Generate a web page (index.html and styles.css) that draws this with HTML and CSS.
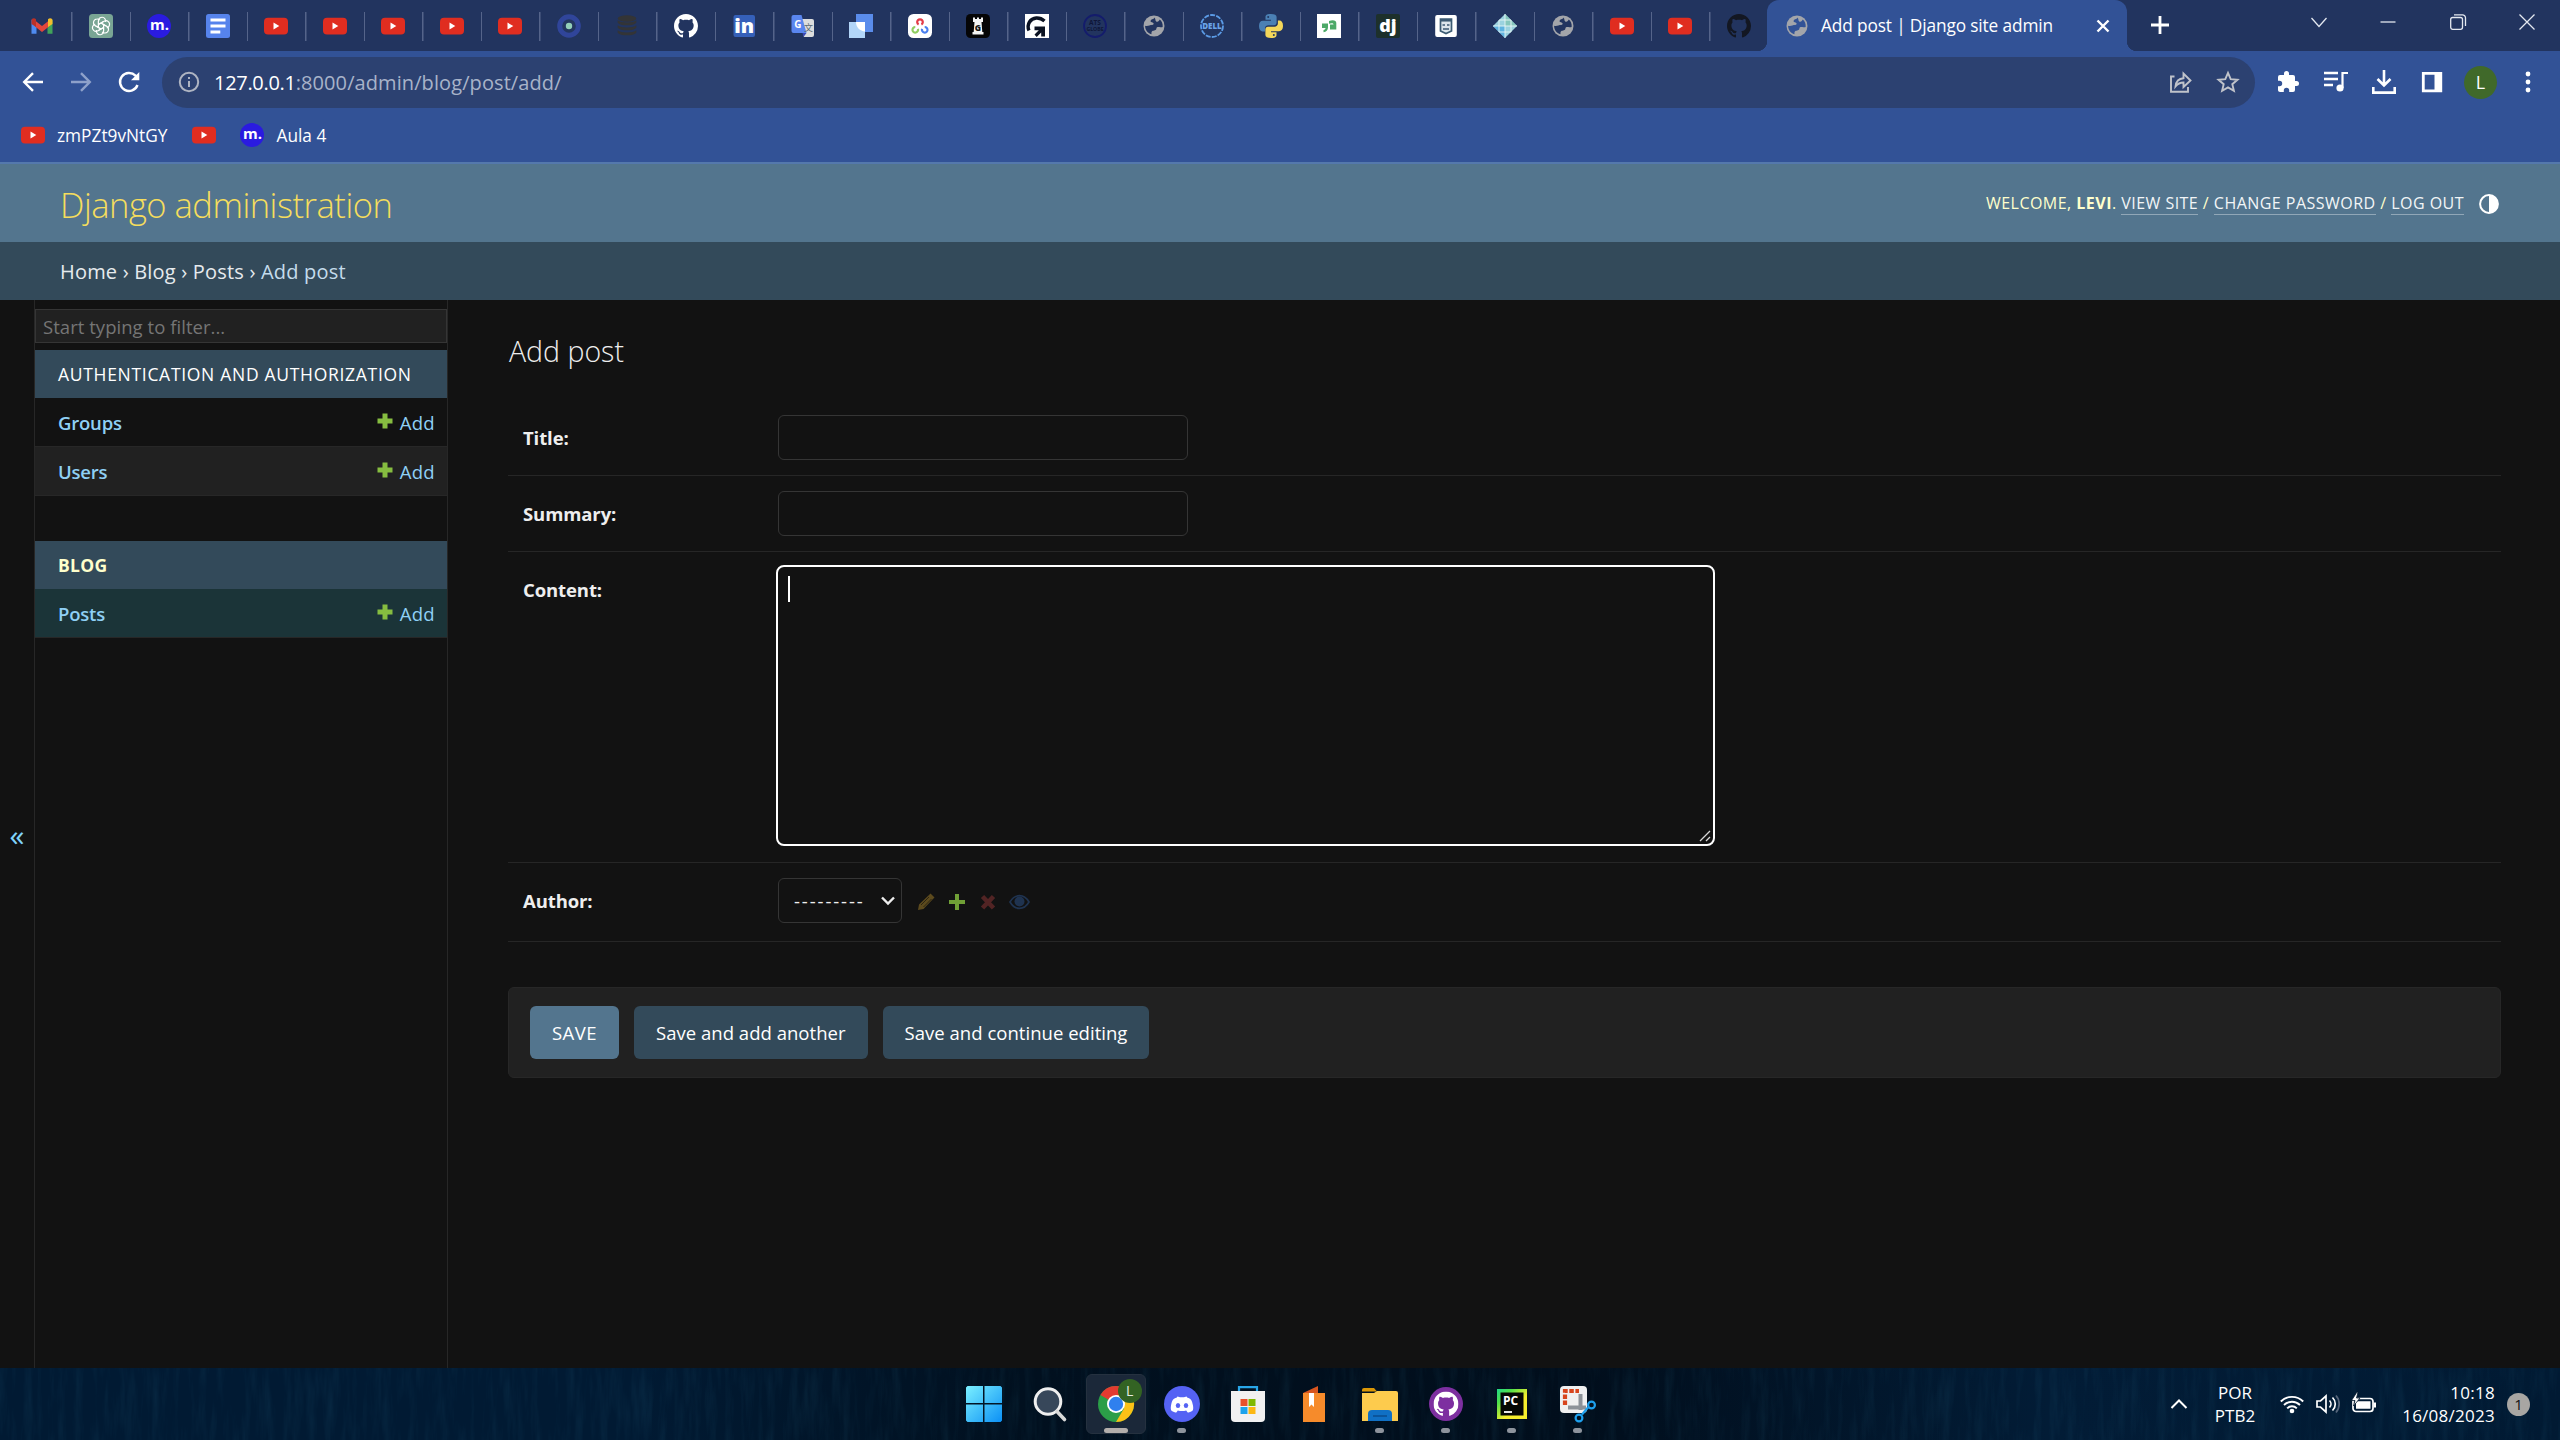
FILE: index.html
```html
<!DOCTYPE html>
<html lang="en">
<head>
<meta charset="utf-8">
<title>Add post | Django site admin</title>
<link rel="stylesheet" href="styles.css">
</head>
<body>
<svg class="defs" aria-hidden="true">
  <defs>
    <symbol id="yt" viewBox="0 0 24 24"><rect y="3.7" width="24" height="16.8" rx="4" fill="#e02d20"/><path d="M9.5 8.6v7l5.8-3.5z" fill="#fff"/></symbol>
    <symbol id="mdot" viewBox="0 0 24 24"><circle cx="12" cy="12" r="12" fill="#2a1be0"/><text x="12.500" y="16" text-anchor="middle" font-size="15" font-weight="700" fill="#fff">m.</text></symbol>
    <symbol id="globe" viewBox="0 0 24 24"><circle cx="12" cy="12" r="10.5" fill="#a3a5aa"/><path d="M12.6 3.6c-1 2-4 1.600-4 3.600 0 1.600 2.600.4 3 2.400.3 1.700-2.600 1.400-4.200 2-1.200.4-3 .8-4.300.2 0 4.200 2.600 7.400 6.300 8.500.4-1.500-.5-2.300 1-3.200 1.500-.8 3.800-.4 4-2.600.1-1.500 1.200-1.700 2.800-1.600 1.500.1 2.600.7 3.500-.2.2-3-.9-5.500-3-7.100-.6 1.700-2 2.500-3.500 1.800-1-.5-.5-2.300-1.600-3.800z" fill="var(--hole)"/></symbol>
    <symbol id="gh" viewBox="0 0 16 16"><path d="M8 0C3.580 0 0 3.580 0 8c0 3.540 2.290 6.530 5.470 7.590.4.070.55-.17.55-.38 0-.19-.01-.82-.01-1.490-2.010.37-2.530-.49-2.690-.94-.09-.23-.48-.94-.82-1.130-.28-.15-.68-.52-.01-.53.63-.01 1.080.58 1.230.82.72 1.210 1.870.87 2.330.66.07-.52.28-.87.51-1.070-1.780-.2-3.640-.89-3.640-3.950 0-.87.31-1.590.82-2.150-.08-.2-.36-1.020.08-2.120 0 0 .67-.21 2.200.82.64-.18 1.320-.27 2-.27s1.360.09 2 .27c1.530-1.040 2.200-.82 2.200-.82.44 1.100.16 1.920.08 2.120.51.56.82 1.270.82 2.150 0 3.070-1.870 3.750-3.650 3.950.29.25.54.73.54 1.480 0 1.070-.01 1.930-.01 2.200 0 .21.15.46.55.38A8.010 8.010 0 0 0 16 8c0-4.420-3.580-8-8-8z" fill="currentColor"/></symbol>
    <symbol id="plus" viewBox="0 0 18 18"><path d="M6.500 1.500h5v5h5v5h-5v5h-5v-5h-5v-5h5z" fill="#86bd40"/></symbol>
  </defs>
</svg>

<header class="strip">
  <div class="tabs">
    <span class="tab"><svg viewBox="0 0 24 24"><path d="M1.500 5.500v14.300h5V9z" fill="#4f8bf0"/><path d="M22.500 5.500v14.300h-5V9z" fill="#41a35a"/><path d="M5 6.500l7 5.500 7-5.500v6l-7 5.500-7-5.500z" fill="#e2463b"/><path d="M1.500 10V6.500C1.500 4 4.500 3.600 6 5.200V13z" fill="#bb3127"/><path d="M22.500 10V6.500C22.500 4 19.500 3.600 18 5.200V13z" fill="#f2bd2d"/></svg></span>
    <span class="tab"><svg viewBox="0 0 24 24"><rect width="24" height="24" rx="3.500" fill="#79a594"/><g fill="none" stroke="#fff" stroke-width="1.100"><path id="petal" d="M9.400 13.500V7a3.600 3.600 0 0 1 6.600-2.100c.7 1 .8 2 .6 3.100M9.400 10.500l5.600-3.200"/><use href="#petal" transform="rotate(60 12 12)"/><use href="#petal" transform="rotate(120 12 12)"/><use href="#petal" transform="rotate(180 12 12)"/><use href="#petal" transform="rotate(240 12 12)"/><use href="#petal" transform="rotate(300 12 12)"/></g></svg></span>
    <span class="tab"><svg><use href="#mdot"/></svg></span>
    <span class="tab"><svg viewBox="0 0 24 24"><rect width="24" height="24" rx="2.500" fill="#5683ec"/><path d="M4.500 6h15M4.500 12h15M4.500 18h9.800" stroke="#fff" stroke-width="2.900"/></svg></span>
    <span class="tab"><svg><use href="#yt"/></svg></span>
    <span class="tab"><svg><use href="#yt"/></svg></span>
    <span class="tab"><svg><use href="#yt"/></svg></span>
    <span class="tab"><svg><use href="#yt"/></svg></span>
    <span class="tab"><svg><use href="#yt"/></svg></span>
    <span class="tab"><svg viewBox="0 0 24 24"><circle cx="12" cy="12" r="9.300" fill="#23365f" stroke="#30459a" stroke-width="5"/><circle cx="12" cy="12" r="3.200" fill="#93cfb9"/></svg></span>
    <span class="tab"><svg viewBox="0 0 24 24" fill="#333436"><ellipse cx="12" cy="4.500" rx="9.300" ry="3.300"/><path id="disk" d="M2.700 6.200c3 3 15.600 3 18.600 0v2.600c-2 3.400-16.600 3.400-18.600 0z"/><use href="#disk" y="5"/><use href="#disk" y="10"/></svg></span>
    <span class="tab light"><svg><use href="#gh"/></svg></span>
    <span class="tab"><svg viewBox="0 0 24 24"><rect x="1.500" y="1" width="21.500" height="22" rx="2" fill="#3560b9"/><text x="12.300" y="19" text-anchor="middle" font-size="20" font-weight="800" fill="#fff">in</text></svg></span>
    <span class="tab"><svg viewBox="0 0 24 24"><path d="M9 5h12a2 2 0 0 1 2 2v14a2 2 0 0 1-2 2h-8z" fill="#dcdddd"/><path d="M2.500 1h8l5 18h-13a2 2 0 0 1-2-2V3a2 2 0 0 1 2-2z" fill="#5a86ef"/><path d="M11.500 19h4l-3 4z" fill="#3a49b4"/><text x="6.800" y="13.500" text-anchor="middle" font-size="10" font-weight="700" fill="#fff">G</text><text x="17.500" y="17" text-anchor="middle" font-size="9" class="cjk" fill="#5d6a72">文</text></svg></span>
    <span class="tab"><svg viewBox="0 0 24 24"><path d="M7 0h17v18H7z" fill="#5a8ceb"/><path d="M0 8h16v16H0z" fill="#b2d5f8"/><path d="M7 8h9v9.500c-5-.5-9-4-9-9.500z" fill="#fff"/></svg></span>
    <span class="tab"><svg viewBox="0 0 24 24"><rect width="24" height="24" rx="5.500" fill="#fff"/><g fill="none" stroke-width="2.200"><path d="M10.600 10.500a2.800 2.800 0 1 1 2.800 0" stroke="#e33b47"/><path d="M9.900 14.800a2.800 2.800 0 1 1-2.600-1.800" stroke="#8fcd62"/><path d="M16.700 13a2.800 2.800 0 1 1-2.600 1.800" stroke="#4a7ff0"/></g></svg></span>
    <span class="tab"><svg viewBox="0 0 24 24"><rect width="24" height="24" rx="4.500" fill="#050506"/><path d="M7 3.500h2V5h2V3.500h2V5h2V3.500h2V8h-1.500l.8 10H17.500v2.500h-11V18h1.200l.8-10H7z" fill="#f4f4f4"/><text x="12" y="16.500" text-anchor="middle" font-size="8.500" font-weight="800" fill="#111">G</text></svg></span>
    <span class="tab"><svg viewBox="0 0 24 24"><path d="M0 0h24v24H0z" fill="#fff"/><path d="M4 16.500A9 9 0 0 1 4.500 8C7.500 3 14.500 2.600 19.500 7" fill="none" stroke="#0b1222" stroke-width="3.400"/><path d="M9.500 12.500h10.500v10h-3.800v-4l-4.500 4.500-2.200-2.500 4.300-4.300H9.500z" fill="#0b1222"/></svg></span>
    <span class="tab"><svg viewBox="0 0 24 24"><circle cx="12" cy="12" r="11" fill="none" stroke="#141c6c" stroke-width="1.800"/><text x="12" y="11.300" text-anchor="middle" font-size="6.500" font-weight="700" fill="#0e1638">ATS</text><text x="12" y="16.800" text-anchor="middle" font-size="5.200" font-weight="700" fill="#0e1638">GLOBE</text></svg></span>
    <span class="tab"><svg><use href="#globe"/></svg></span>
    <span class="tab"><svg viewBox="0 0 24 24"><circle cx="12" cy="12" r="11" fill="none" stroke="#5b9be6" stroke-width="1.800" stroke-dasharray="5 1.200"/><text x="12" y="15" text-anchor="middle" font-size="8" font-weight="800" fill="#6ba4e8">DELL</text></svg></span>
    <span class="tab"><svg viewBox="0 0 24 24"><path d="M11.800 0C7 0 6.500 1.700 6.500 3v2.800H12v1H4C1.500 6.800 0 8.600 0 12s1.500 5.400 3.500 5.400H6v-3c0-2 1.600-3.200 3.500-3.200H15c1.600 0 2.600-1.200 2.600-2.700V3c0-1.800-1.800-3-5.800-3z" fill="#4b80b4"/><path d="M12.200 24c4.800 0 5.300-1.700 5.300-3v-2.800H12v-1h8c2.500 0 4-1.800 4-5.200s-1.500-5.400-3.500-5.400h-1.600v3c0 2-1.500 3.200-3.400 3.200H9c-1.600 0-2.600 1.200-2.600 2.700V21c0 1.800 1.800 3 5.800 3z" fill="#f4d75a"/><circle cx="9.200" cy="2.900" r="1" fill="#23365f"/><circle cx="14.800" cy="21.100" r="1" fill="#23365f"/></svg></span>
    <span class="tab"><svg viewBox="0 0 24 24"><path d="M0 0h24v24H0z" fill="#fff"/><path d="M5 9.500h6v4c0 2.500-1.800 4.300-4.500 4.800v-2.300c1.300-.4 2-1 2-2H5zM12 7c4-1.600 7.300-.7 7.300 2v6.500h-6.300v-5H16.500c0-1.500-2-1.600-4.500-.8z" fill="#4da968"/></svg></span>
    <span class="tab"><svg viewBox="0 0 24 24"><rect width="24" height="24" rx="2" fill="#1d302b"/><text x="12" y="17.500" text-anchor="middle" font-size="18" font-weight="800" fill="#fff">dj</text></svg></span>
    <span class="tab"><svg viewBox="0 0 24 24"><rect x="1.200" y="1" width="21.600" height="22" rx="2" fill="#fff"/><path d="M6.500 5h11v12L12 19.500 6.500 17z" fill="#dce6ec" stroke="#3b5a72" stroke-width="1.700"/><path d="M6.500 6.300h11" stroke="#3b5a72" stroke-width="2.500"/><path d="M8.500 11h2.500M13 11h2.500M9 15h6" stroke="#3b5a72" stroke-width="1.500"/></svg></span>
    <span class="tab"><svg viewBox="0 0 24 24"><path d="M12 0l12 12-12 12L0 12z" fill="#9bd2df"/><path d="M12 12v12L0 12z" fill="#5fb3e0"/><path d="M12 0l12 12H12z" fill="#86c7bd"/><path d="M6 6v12M12 0v24M18 6v12M6 6h12M0 12h24M6 18h12" stroke="#e6f6f5" stroke-width=".9"/></svg></span>
    <span class="tab"><svg><use href="#globe"/></svg></span>
    <span class="tab"><svg><use href="#yt"/></svg></span>
    <span class="tab"><svg><use href="#yt"/></svg></span>
    <span class="tab last dark"><svg><use href="#gh"/></svg></span>
  </div>
  <div class="active-tab">
    <svg class="fav"><use href="#globe"/></svg>
    <span class="tab-title">Add post | Django site admin</span>
    <svg class="x" viewBox="0 0 14 14"><path d="M1.500 1.500l11 11M12.500 1.500l-11 11" stroke="#fff" stroke-width="2.400"/></svg>
  </div>
  <svg class="newtab" viewBox="0 0 18 18"><path d="M9 0v18M0 9h18" stroke="#fff" stroke-width="2.800"/></svg>
  <div class="winctl">
    <svg viewBox="0 0 16 16"><path d="M.5 4L8 12.500 15.500 4" /></svg>
    <svg viewBox="0 0 16 16"><path d="M.5 8h15"/></svg>
    <svg viewBox="0 0 16 16"><rect x=".7" y="3.500" width="11.800" height="11.800" rx="2"/><path d="M4 .8h8.500a3 3 0 0 1 3 3V12"/></svg>
    <svg viewBox="0 0 16 16"><path d="M.5.5l15 15M15.500.5l-15 15"/></svg>
  </div>
</header>

<div class="toolbar">
  <svg class="tb back" viewBox="0 0 24 24"><path d="M22 12H3.500M12 3.200L3.200 12l8.800 8.800"/></svg>
  <svg class="tb fwd" viewBox="0 0 24 24"><path d="M2 12h18.500M12 3.200l8.800 8.800-8.800 8.800"/></svg>
  <svg class="tb reload" viewBox="0 0 24 24"><path d="M20.500 15A9 9 0 1 1 18.500 5.700l2 2"/><path d="M22.300 2v8.300H14z" fill="#fff" stroke="none"/></svg>
  <div class="omni">
    <svg class="info" viewBox="0 0 22 22"><circle cx="11" cy="11" r="9.200"/><path d="M11 10v6M11 6v2"/></svg>
    <span class="url"><b>127.0.0.1</b><span>:8000/admin/blog/post/add/</span></span>
    <svg class="share" viewBox="0 0 24 24"><path d="M5.500 6.500H2v15.300h17V17"/><path d="M6.500 16.500c.5-5 3.500-8 8-8.300V3.500l7 7-7 6.500v-4.500c-4 0-6 1.500-8 4z"/></svg>
    <svg class="star" viewBox="0 0 24 24"><path d="M12 2.800l2.700 6.300 6.800.6-5.200 4.500 1.600 6.700-5.900-3.500-5.900 3.500 1.600-6.700-5.200-4.500 6.800-.6z"/></svg>
  </div>
  <div class="ext">
    <svg viewBox="0 0 24 24"><path d="M20.500 11H19V7a2 2 0 0 0-2-2h-4V3.500a2.500 2.500 0 0 0-5 0V5H4a2 2 0 0 0-2 2v3.800h1.500a2.700 2.700 0 0 1 0 5.400H2V20c0 1.100.9 2 2 2h3.800v-1.500a2.700 2.700 0 0 1 5.400 0V22H17a2 2 0 0 0 2-2v-4h1.500a2.500 2.500 0 0 0 0-5z" fill="#fff"/></svg>
    <svg viewBox="0 0 24 24"><path d="M0 3h14M0 9h14M0 15h9" stroke="#fff" stroke-width="2.400"/><path d="M18.500 18V3H24" stroke="#fff" stroke-width="2.200" fill="none"/><circle cx="16" cy="18" r="3.600" fill="#fff"/></svg>
    <svg viewBox="0 0 24 24"><path d="M12 0v14M5.500 9l6.500 6.500L18.500 9M1.300 17v5.600h21.400V17" stroke="#fff" stroke-width="2.600" fill="none"/></svg>
    <svg viewBox="0 0 24 24"><path d="M3.300 3.300h17.500v17.500H3.300z" stroke="#fff" stroke-width="2.800" fill="none"/><path d="M14.500 3H22v18h-7.500z" fill="#fff"/></svg>
    <span class="avatar">L</span>
    <svg viewBox="0 0 24 24" fill="#fff"><circle cx="11" cy="4" r="2.400"/><circle cx="11" cy="12" r="2.400"/><circle cx="11" cy="20" r="2.400"/></svg>
  </div>
</div>

<div class="bookmarks">
  <svg><use href="#yt"/></svg><span class="bm1">zmPZt9vNtGY</span>
  <svg><use href="#yt"/></svg>
  <svg class="bm-m"><use href="#mdot"/></svg><span>Aula 4</span>
</div>

<div class="dj-header">
  <span class="brand">Django administration</span>
  <div class="usertools">WELCOME, <b>LEVI</b>. <a>VIEW SITE</a> / <a>CHANGE PASSWORD</a> / <a>LOG OUT</a></div>
  <svg class="theme" viewBox="0 0 20 20"><circle cx="10" cy="10" r="8.900" fill="none" stroke="#fff" stroke-width="2"/><path d="M10 1a9 9 0 0 1 0 18z" fill="#fff"/></svg>
</div>
<nav class="crumbs"><span>Home › Blog › Posts › <i>Add post</i></span></nav>

<div class="main">
  <div class="toggle">«</div>
  <aside class="nav">
    <div class="filter">Start typing to filter...</div>
    <section class="app">
      <h2>AUTHENTICATION AND AUTHORIZATION</h2>
      <div class="row"><b>Groups</b><svg><use href="#plus"/></svg><span>Add</span></div>
      <div class="row alt"><b>Users</b><svg><use href="#plus"/></svg><span>Add</span></div>
    </section>
    <section class="app">
      <h2 class="cur">BLOG</h2>
      <div class="row sel"><b>Posts</b><svg><use href="#plus"/></svg><span>Add</span></div>
    </section>
  </aside>
  <main class="content">
    <h1>Add post</h1>
    <div class="field"><label>Title:</label><div class="input"></div></div>
    <div class="field"><label>Summary:</label><div class="input"></div></div>
    <div class="field area"><label>Content:</label><div class="textarea"><i class="caret"></i><svg viewBox="0 0 12 12"><path d="M1 11L11 1M7 11l4-4" stroke="#d8d8d8" stroke-width="1.300"/></svg></div></div>
    <div class="field author"><label>Author:</label>
      <div class="select"><span>---------</span><svg viewBox="0 0 14 10"><path d="M1 1.500l6 6 6-6" fill="none" stroke="#eee" stroke-width="2.400"/></svg></div>
      <div class="related">
        <svg viewBox="0 0 18 18"><path d="M1 17l1-5.500L12 2l1.500-1.500 4 4L16 6 6.500 16z" fill="#5c4a1d"/><path d="M4 12l8-8M6.500 14l8-8" stroke="#2b2413" stroke-width="1"/></svg>
        <svg viewBox="0 0 18 18"><path d="M7 1h4v6h6v4h-6v6H7v-6H1V7h6z" fill="#70a036"/></svg>
        <svg viewBox="0 0 18 18"><path d="M3.500 3.500l11 11.500M14.500 3.500l-11 11.500" stroke="#522424" stroke-width="4.600"/></svg>
        <svg class="eye" viewBox="0 0 21 18"><path d="M1 9c5-8.500 14-8.500 19 0-5 8.500-14 8.500-19 0z" fill="none" stroke="#1f3350" stroke-width="1.700"/><circle cx="10.500" cy="8.500" r="5" fill="#1f3350"/></svg>
      </div>
    </div>
    <div class="submit">
      <span class="btn default">SAVE</span>
      <span class="btn">Save and add another</span>
      <span class="btn">Save and continue editing</span>
    </div>
  </main>
</div>

<footer class="taskbar">
  <svg class="grain"><filter id="streaks" x="0" y="0" width="100%" height="100%"><feTurbulence type="fractalNoise" baseFrequency=".12 .015" numOctaves="4" seed="4"/><feColorMatrix values="0 0 0 0 .05  0 0 0 0 .32  0 0 0 0 .5  1.800 0 0 0 -.75"/></filter><rect width="100%" height="100%" filter="url(#streaks)"/></svg>
  <div class="apps">
    <span class="app-i"><svg viewBox="0 0 36 36"><defs><linearGradient id="win" x1="0" y1="0" x2="1" y2="1"><stop offset="0" stop-color="#7bf0ff"/><stop offset="1" stop-color="#0b90f5"/></linearGradient></defs><path d="M1.500 0H17v17H0V1.500zM18.500 0H34.500L36 1.500V17H18.500zM0 18.500h17V36H1.500L0 34.500zM18.500 18.500H36v16L34.500 36h-16z" fill="url(#win)"/></svg></span>
    <span class="app-i"><svg viewBox="0 0 36 36"><circle cx="16" cy="15.500" r="12.800" fill="#37475a" stroke="#efefef" stroke-width="3"/><path d="M25 25.500l7.500 8" stroke="#d9d9d9" stroke-width="3.600" stroke-linecap="round"/></svg></span>
    <span class="app-i on"><svg viewBox="0 0 36 36"><circle cx="18" cy="18" r="18" fill="#2b9e48"/><path d="M18 18L2.400 9A18 18 0 0 1 33.600 9z" fill="#e33b30"/><path d="M18 9h15.600A18 18 0 0 1 18 36l8-13.500z" fill="#fbc116"/><circle cx="18" cy="18" r="9" fill="#fff"/><circle cx="18" cy="18" r="7.200" fill="#2f80ee"/></svg><em class="badge">L</em><i class="dot wide"></i></span>
    <span class="app-i"><svg viewBox="0 0 36 36"><circle cx="18" cy="18" r="18" fill="#5562f4"/><path d="M13.500 10.500l-1 1.200C9.500 12.300 8 14 7 19.500c-.5 3 0 4.500.3 5 2 1.600 3.700 2 5 2l1.500-2c2.500.8 5.900.8 8.400 0l1.500 2c1.300 0 3-.4 5-2 .3-.5.8-2 .3-5-1-5.500-2.500-7.200-5.500-7.800l-1-1.200-2.500.8h-4z" fill="#fff"/><ellipse cx="14" cy="19.500" rx="2.200" ry="2.500" fill="#5562f4"/><ellipse cx="22" cy="19.500" rx="2.200" ry="2.500" fill="#5562f4"/></svg><i class="dot"></i></span>
    <span class="app-i"><svg viewBox="0 0 36 36"><path d="M9 6V1.200h18V6" fill="none" stroke="#28a6e8" stroke-width="2.200"/><path d="M1 5h34v27a4 4 0 0 1-4 4H5a4 4 0 0 1-4-4z" fill="#f1f1f1"/><path d="M10.500 13h7v7h-7z" fill="#e8502b"/><path d="M18.500 13h7v7h-7z" fill="#7fb900"/><path d="M10.500 21h7v7h-7z" fill="#1ba3ec"/><path d="M18.500 21h7v7h-7z" fill="#fcb813"/></svg></span>
    <span class="app-i"><svg viewBox="0 0 36 36"><path d="M7 7L22 0v7z" fill="#d7551f"/><path d="M7 7h22v29H7z" fill="#f68b2b"/><path d="M13 7h5v14l-2.500-2.500L13 21z" fill="#fff"/></svg></span>
    <span class="app-i"><svg viewBox="0 0 36 36"><path d="M0 4a2 2 0 0 1 2-2h10l3 3.500H0z" fill="#db9706"/><path d="M0 7h12l3-2h19a2 2 0 0 1 2 2v28H0z" fill="#fdcb4d"/><path d="M6 35v-7a4 4 0 0 1 4-4h16a4 4 0 0 1 4 4v7z" fill="#1070c4"/><path d="M11 30h14" stroke="#0b4f92" stroke-width="1.600"/></svg><i class="dot"></i></span>
    <span class="app-i"><svg viewBox="0 0 36 36"><circle cx="18" cy="18" r="17" fill="#7d2fa0"/><svg x="5.500" y="5.500" width="25" height="25" viewBox="0 0 16 16" color="#fff"><use href="#gh"/></svg></svg><i class="dot"></i></span>
    <span class="app-i"><svg viewBox="0 0 36 36"><defs><linearGradient id="pc" x1="0" y1="0" x2="1" y2="1"><stop offset="0" stop-color="#21d789"/><stop offset=".25" stop-color="#4fe04a"/><stop offset=".6" stop-color="#f5ee2d"/></linearGradient></defs><path d="M3 3h30v30H3z" fill="url(#pc)"/><path d="M6.500 6.500h23v23h-23z" fill="#050805"/><text x="16.500" y="18.500" text-anchor="middle" font-size="12" font-weight="700" fill="#fff">PC</text><path d="M10 26h8" stroke="#fff" stroke-width="1.800"/></svg><i class="dot"></i></span>
    <span class="app-i"><svg viewBox="0 0 36 36"><rect width="27" height="27" rx="4" fill="#f0f0f0"/><path d="M5 19V5h14" fill="none" stroke="#d8451d" stroke-width="4.200" stroke-dasharray="4.500 1.600"/><path d="M20.500 8v16M8 21.500h18" stroke="#8d9298" stroke-width="4"/><g fill="none" stroke="#1da0ee" stroke-width="2.200"><circle cx="31.500" cy="19" r="3.400"/><circle cx="19" cy="32" r="3.400"/><path d="M22 28.500l6-7"/></g></svg><i class="dot"></i></span>
  </div>
  <div class="tray">
    <svg class="chev" viewBox="0 0 18 12"><path d="M1.500 10L9 2.500l7.500 7.500"/></svg>
    <div class="lang"><span>POR</span><span>PTB2</span></div>
    <svg class="ti" viewBox="0 0 24 24"><g fill="none" stroke="#fff" stroke-width="1.900"><path d="M.8 9.500a15.800 15.800 0 0 1 22.400 0M4 13a11.300 11.300 0 0 1 16 0M7.200 16.300a6.800 6.800 0 0 1 9.600 0"/></g><circle cx="12" cy="19" r="2.300" fill="#fff"/></svg>
    <svg class="ti" viewBox="0 0 24 24"><path d="M1 9h3.500L10 4v16l-5.500-5H1zM13.500 8.500a5 5 0 0 1 0 7M16.500 5.500a9 9 0 0 1 0 13" fill="none" stroke="#fff" stroke-width="1.700"/><path d="M20 3.500a13 13 0 0 1 0 17" fill="none" stroke="#56657a" stroke-width="1.700"/></svg>
    <svg class="ti" viewBox="0 0 24 24"><rect x="1" y="6.500" width="20" height="13" rx="3" fill="none" stroke="#fff" stroke-width="1.700"/><path d="M4 9.300h14.500v7.500H4zM21.500 10.500h2.500v5h-2.500z" fill="#fff"/><path d="M5 0L-.5 8.500H3L1.500 14 8 6H4.500L6 0z" fill="#fff" stroke="#04182c" stroke-width=".8"/></svg>
    <div class="clock"><span>10:18</span><span>16/08/2023</span></div>
    <span class="count">1</span>
  </div>
</footer>
</body>
</html>
```
FILE: styles.css
```css
* { box-sizing: border-box; }

body {
  margin: 0;
  width: 2560px;
  height: 1440px;
  overflow: hidden;
  display: flex;
  flex-direction: column;
  background: #121212;
  color: #eee;
  font-family: "Open Sans", "Noto Sans", sans-serif;
  font-size: 18.500px;
}

svg { display: block; flex: none; overflow: visible; }
i, em { font-style: normal; }
.defs { position: absolute; width: 0; height: 0; }
.cjk { font-family: "Noto Sans CJK SC", sans-serif; }

/* browser tab strip */
.strip { display: flex; height: 51px; flex: none; background: #22345f; --hole: #22345f; }
.tabs { display: flex; padding-left: 14px; width: 1767px; flex: none; }
.tab {
  width: 58.500px;
  height: 51px;
  flex: none;
  display: flex;
  align-items: center;
  justify-content: center;
  padding-right: 2px;
  background: linear-gradient(#55648a, #55648a) right 12px / 1.500px 29px no-repeat;
}
.tab.last { background: none; }
.tab svg { width: 24px; height: 24px; }
.tab.light { color: #fff; }
.tab.dark { color: #131722; }
.active-tab {
  position: relative;
  width: 360px;
  flex: none;
  display: flex;
  align-items: center;
  background: #325296;
  border-radius: 12px 12px 0 0;
  --hole: #325296;
}
.active-tab::before, .active-tab::after {
  content: "";
  position: absolute;
  bottom: 0;
  width: 10px;
  height: 10px;
}
.active-tab::before { left: -10px; background: radial-gradient(circle at 0 0, transparent 10px, #325296 10.500px); }
.active-tab::after { right: -10px; background: radial-gradient(circle at 100% 0, transparent 10px, #325296 10.500px); }
.fav { width: 24px; height: 24px; margin-left: 18px; }
.tab-title { margin-left: 12px; font-size: 17.300px; letter-spacing: -.14px; color: #fff; white-space: nowrap; }
.x { width: 14px; height: 14px; margin: 0 17px 0 auto; }
.newtab { width: 18px; height: 18px; margin: 16px 0 0 24px; }
.winctl { display: flex; margin: 14px 25px 0 auto; gap: 53.500px; }
.winctl svg { width: 16px; height: 16px; fill: none; stroke: #e4e8f0; stroke-width: 1.300; }

/* address row */
.toolbar { display: flex; align-items: center; height: 62px; flex: none; background: #325296; padding: 0 21px; }
.tb { width: 24px; height: 24px; margin-right: 24px; fill: none; stroke: #fff; stroke-width: 2.400; }
.fwd { stroke: #8ea1ca; }
.reload { margin-right: 21px; }
.omni {
  display: flex;
  flex: none;
  align-items: center;
  width: 2093px;
  height: 51px;
  border-radius: 26px;
  background: #2c4171;
  padding: 0 15px 0 16px;
}
.info { width: 22px; height: 22px; fill: none; stroke: #aeb4c2; stroke-width: 2; }
.url { margin-left: 14px; margin-right: auto; font-size: 20px; color: #a8b3c9; letter-spacing: .09px; }
.url b { font-weight: 400; color: #fff; letter-spacing: -.3px; }
.share, .star { width: 24px; height: 24px; fill: none; stroke: #c0c3ca; stroke-width: 1.900; }
.star { margin-left: 23px; }
.ext { display: flex; align-items: center; margin-left: 21px; gap: 24px; }
.ext svg { width: 24px; height: 24px; }
.avatar {
  width: 33px;
  height: 33px;
  margin: 0 -4px;
  border-radius: 50%;
  background: #40692a;
  color: #fff;
  font-size: 18px;
  line-height: 33px;
  text-align: center;
}
.bookmarks { display: flex; align-items: center; height: 49px; flex: none; padding: 0 0 5px 21px; background: #325296; color: #fff; font-size: 17.300px; }
.bookmarks svg { width: 24px; height: 24px; }
.bookmarks span { margin-left: 12px; }
.bm1 { margin-right: 25px; }
.bookmarks .bm-m { margin-left: 24px; }

/* admin header */
.dj-header {
  display: flex;
  align-items: center;
  height: 80px;
  flex: none;
  padding: 2px 61px 0 60px;
  background: #53758e;
  border-top: 2px solid #5478ac;
}
.brand { font-size: 34.500px; font-weight: 300; letter-spacing: -.48px; color: #f5dd5d; white-space: nowrap; }
.usertools { margin: -3px 0 0 auto; font-size: 16px; letter-spacing: .47px; color: #ffffcc; white-space: nowrap; }
.usertools a { color: #f2f5f7; border-bottom: 1.500px solid #91a7b7; }
.theme { width: 20px; height: 20px; margin-left: 15px; }
.crumbs { height: 58px; flex: none; padding: 1px 60px 0; display: flex; align-items: center; background: #334a5a; color: #e6ebee; font-size: 20px; letter-spacing: .19px; }
.crumbs i { color: #c4dcec; }

/* body columns */
.main { display: flex; height: 1068px; flex: none; }
.toggle { width: 34px; flex: none; display: flex; align-items: center; justify-content: center; color: #81d4fa; font-size: 30px; }
.nav { width: 414px; flex: none; padding-top: 9px; border: solid #272727; border-width: 0 1px; }
.filter { height: 34px; padding: 0 7px; border: 1px solid #353535; background: #212121; color: #757575; letter-spacing: .04px; line-height: 34px; }
.app { margin: 7px 0 45px; }
.app h2 { margin: 0; height: 48px; padding-left: 23px; background: #334a5a; color: #fff; font-size: 17.500px; font-weight: 400; letter-spacing: .7px; line-height: 49px; white-space: nowrap; }
.app h2.cur { color: #ffffcc; font-weight: 700; letter-spacing: .3px; }
.row { display: flex; align-items: center; height: 49px; padding: 0 12px 0 23px; border-bottom: 1px solid #272727; color: #8fd0f5; }
.row b { font-weight: 600; letter-spacing: -.2px; margin-right: auto; }
.row svg { width: 18px; height: 18px; margin: -3px 6px 0 0; }
.row span { letter-spacing: .3px; }
.row.alt { background: #212121; }
.row.sel { background: #1b3438; }

/* form */
.content { flex: none; width: 1993px; margin-left: 60px; }
h1 { margin: 0; padding: 29px 0 0 1px; height: 100px; font-size: 28.500px; font-weight: 300; line-height: 45px; }
.field { display: flex; height: 76px; padding: 15px 15px 0; border-bottom: 1px solid #262626; }
.field label { width: 255px; flex: none; font-weight: 700; letter-spacing: -.1px; line-height: 46px; }
.input { width: 410px; height: 45px; border: 1px solid #353535; border-radius: 6px; }
.area { height: 311px; }
.textarea { position: relative; width: 939px; height: 281px; margin: -2px 0 0 -2px; border: 2px solid #fff; border-radius: 8px; }
.caret { display: block; width: 2px; height: 26px; margin: 9px 0 0 10px; background: #fff; }
.textarea svg { position: absolute; right: 2px; bottom: 2px; width: 12px; height: 12px; }
.author { height: 79px; }
.select { display: flex; align-items: center; justify-content: space-between; width: 124px; height: 45px; padding: 0 6px 0 15px; border: 1px solid #353535; border-radius: 6px; letter-spacing: 1.900px; }
.select svg { width: 14px; height: 10px; }
.related { display: flex; align-items: center; height: 48px; gap: 13px; margin-left: 15px; }
.related svg { width: 18px; height: 18px; }
.related .eye { width: 21px; margin-left: -1px; }
.submit { display: flex; gap: 15px; height: 91px; margin-top: 45px; padding: 18px 21px; background: #212121; border: 1px solid #272727; border-radius: 6px; }
.btn { height: 53px; padding: 0 22px; border-radius: 6px; background: #334a5a; color: #fff; letter-spacing: .03px; line-height: 53px; white-space: nowrap; }
.btn.default { background: #53758e; letter-spacing: .45px; }

/* system taskbar */
.taskbar {
  position: relative;
  display: flex;
  height: 72px;
  flex: none;
  background: linear-gradient(90deg, #011a33, #011a33 25%, #01101f 40%, #010e1c 62%, #021c36 80%, #011a33);
}
.grain { position: absolute; left: 0; top: 0; width: 100%; height: 100%; opacity: .1; }
.apps { position: relative; display: flex; gap: 6.100px; margin: 6px 0 0 953.500px; }
.app-i { position: relative; width: 60px; height: 60px; border-radius: 6px; }
.app-i > svg { width: 36px; height: 36px; margin: 12px; }
.app-i.on { background: #1b2839; border: 1px solid #25313f; }
.app-i.on > svg { margin: 11px; }
.dot { position: absolute; bottom: 1px; left: 25px; width: 9px; height: 5px; border-radius: 3px; background: #8d939c; }
.dot.wide { left: 17px; bottom: 0; width: 24px; background: #b3aeab; }
.badge { position: absolute; left: 31px; top: 4px; width: 24px; height: 24px; border-radius: 50%; background: #336323; color: #e6ece3; font-size: 14px; line-height: 24px; text-align: center; }
.tray { position: relative; display: flex; align-items: center; margin-left: auto; padding-right: 30px; color: #fff; font-size: 17px; line-height: 23px; }
.chev { width: 18px; height: 12px; fill: none; stroke: #fff; stroke-width: 2; }
.lang, .clock { display: flex; flex-direction: column; align-items: center; }
.lang { width: 60px; margin: 0 15px 0 17px; }
.ti { width: 24px; height: 24px; margin-right: 12px; }
.clock { align-items: flex-end; margin: -1px 12px 0 14px; width: 93px; letter-spacing: .26px; }
.count { width: 23px; height: 23px; border-radius: 50%; background: #a8a6a3; color: #111; font-size: 15px; text-align: center; }
```
